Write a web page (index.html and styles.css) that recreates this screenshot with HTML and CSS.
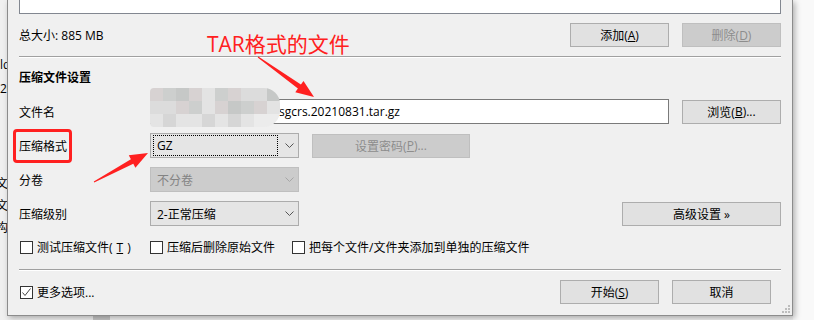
FILE: index.html
```html
<!DOCTYPE html>
<html lang="zh-CN">
<head>
  <meta charset="UTF-8">
  <meta name="viewport" content="width=device-width, initial-scale=1.0">
  <title>压缩文件设置</title>
  <link rel="stylesheet" href="styles.css">
</head>
<body>
  <div class="desktop">
    <!-- window behind the dialog, only a thin strip shows -->
    <div class="back-window">
      <div class="back-line l1">ld</div>
      <div class="back-line l2">20</div>
      <div class="back-line l3">文</div>
      <div class="back-line l4">文</div>
      <div class="back-line l5">构</div>
    </div>
    <div class="back-thumb"></div>

    <div class="dialog">
      <div class="file-list"></div>

      <div class="size-row">
        <span>总大小: 885 MB</span>
        <div class="btn-group">
          <button class="btn">添加(<u>A</u>)</button>
          <button class="btn" disabled>删除(<u>D</u>)</button>
        </div>
      </div>

      <div class="sep sep-top"></div>

      <h2 class="section-title">压缩文件设置</h2>

      <div class="form-row first">
        <span class="label">文件名</span>
        <div class="text-input">sgcrs.20210831.tar.gz</div>
        <button class="btn">浏览(<u>B</u>)...</button>
      </div>

      <div class="form-row">
        <span class="label">压缩格式</span>
        <div class="combo">
          <span class="combo-val focused">GZ</span>
          <svg class="chev" width="9" height="5" viewBox="0 0 9 5"><polyline points="0.5,0.5 4.5,4.5 8.5,0.5" fill="none" stroke="#555" stroke-width="1"/></svg>
        </div>
        <button class="btn btn-pass" disabled>设置密码(<u>P</u>)...</button>
      </div>

      <div class="form-row">
        <span class="label">分卷</span>
        <div class="combo disabled">
          <span class="combo-val">不分卷</span>
          <svg class="chev" width="9" height="5" viewBox="0 0 9 5"><polyline points="0.5,0.5 4.5,4.5 8.5,0.5" fill="none" stroke="#a6a6a6" stroke-width="1"/></svg>
        </div>
      </div>

      <div class="form-row">
        <span class="label">压缩级别</span>
        <div class="combo">
          <span class="combo-val">2-正常压缩</span>
          <svg class="chev" width="9" height="5" viewBox="0 0 9 5"><polyline points="0.5,0.5 4.5,4.5 8.5,0.5" fill="none" stroke="#555" stroke-width="1"/></svg>
        </div>
        <button class="btn btn-wide">高级设置 »</button>
      </div>

      <div class="check-row">
        <label class="check w-label"><span class="box"></span>测试压缩文件(<u>T</u>)</label>
        <label class="check w-mid"><span class="box"></span>压缩后删除原始文件</label>
        <label class="check"><span class="box"></span>把每个文件/文件夹添加到单独的压缩文件</label>
      </div>

      <div class="sep sep-bottom"></div>

      <div class="bottom-row">
        <label class="check">
          <span class="box">
            <svg width="11" height="11" viewBox="0 0 11 11"><polyline points="1.5,5.5 4,8.5 9.5,1.5" fill="none" stroke="#444" stroke-width="1"/></svg>
          </span>更多选项...
        </label>
        <div class="btn-group">
          <button class="btn">开始(<u>S</u>)</button>
          <button class="btn">取消</button>
        </div>
      </div>

      <svg class="grip" width="8" height="8" viewBox="0 0 8 8">
        <rect x="6" y="0" width="2" height="2" fill="#bdbdbd"/>
        <rect x="3" y="3" width="2" height="2" fill="#bdbdbd"/>
        <rect x="6" y="3" width="2" height="2" fill="#bdbdbd"/>
        <rect x="0" y="6" width="2" height="2" fill="#bdbdbd"/>
        <rect x="3" y="6" width="2" height="2" fill="#bdbdbd"/>
        <rect x="6" y="6" width="2" height="2" fill="#bdbdbd"/>
      </svg>
    </div>

    <!-- screenshot annotations drawn on top -->
    <div class="mosaic">
      <span></span><span></span><span></span><span></span><span></span><span></span><span></span><span></span><span></span><span></span>
      <span></span><span></span><span></span><span></span><span></span><span></span><span></span><span></span><span></span><span></span>
      <span></span><span></span><span></span><span></span><span></span><span></span><span></span><span></span><span></span><span></span>
    </div>
    <div class="note">TAR格式的文件</div>
    <div class="red-box"></div>
    <svg class="arrows" width="814" height="320" viewBox="0 0 814 320">
      <polygon points="257.7,57.4 297.9,88.6 295.3,92.3 314,97 303.5,80.9 300.9,84.6 258.3,56.6" fill="#ff2020"/>
      <polygon points="94.2,182.4 133.3,163.7 135.4,167.7 148,153 128.8,155.3 130.9,159.3 93.8,181.6" fill="#ff2020"/>
    </svg>
  </div>
</body>
</html>
```

FILE: styles.css
```css
* {
  box-sizing: border-box;
}

body {
  margin: 0;
  font-family: "Open Sans", "Noto Sans CJK SC", sans-serif;
  font-size: 12px;
  color: #000;
  background: #f0f0f0;
}

.desktop {
  position: relative;
  width: 814px;
  height: 320px;
  overflow: hidden;
  background: linear-gradient(to right, #f0f0f0 793px, #f9f9f9 793px);
}

/* the window behind, only its edge shows */
.back-window {
  position: absolute;
  left: 0;
  top: 0;
  width: 7px;
  height: 320px;
  overflow: hidden;
  display: flex;
  flex-direction: column;
  line-height: 16px;
  white-space: nowrap;
}

.back-line.l1 { margin-top: 57px; }
.back-line.l2 { margin-top: 8px; }
.back-line.l3 { margin-top: 79px; margin-left: -4px; }
.back-line.l4 { margin-top: 6px; margin-left: -4px; }
.back-line.l5 { margin-top: 6px; margin-left: -4px; }

.back-thumb {
  position: absolute;
  left: 93px;
  top: 316px;
  width: 17px;
  height: 4px;
  background: #c6c6c6;
}

/* dialog */
.dialog {
  position: relative;
  z-index: 1;
  margin-left: 7px;
  width: 786px;
  height: 316px;
  padding: 0 11px;
  background: #f0f0f0;
  border: 1px solid #8c8c8c;
  border-top: 0;
  box-shadow: 2px 2px 6px rgba(0, 0, 0, 0.3);
  display: flex;
  flex-direction: column;
}

.file-list {
  height: 14px;
  background: #fff;
  border: 1px solid #828790;
  border-top: 0;
}

.size-row {
  margin-top: 9px;
  height: 24px;
  display: flex;
  align-items: center;
  justify-content: space-between;
}

.btn-group {
  display: flex;
  gap: 13px;
}

.btn {
  width: 99px;
  height: 24px;
  padding: 0;
  font: inherit;
  color: #000;
  background: #e1e1e1;
  border: 1px solid #adadad;
  display: flex;
  align-items: center;
  justify-content: center;
}

.btn:disabled {
  color: #8d8d8d;
  background: #cccccc;
  border-color: #bfbfbf;
}

.btn-pass {
  width: 158px;
  margin-left: 13px;
}

.btn-wide {
  width: 159px;
  margin-left: auto;
}

.sep {
  height: 2px;
  border-top: 1px solid #a0a0a0;
  border-bottom: 1px solid #fff;
}

.sep-top { margin-top: 9px; }
.sep-bottom { margin-top: 14px; }

.section-title {
  margin: 12px 0 0;
  font-size: 12px;
  font-weight: bold;
  line-height: 16px;
}

.form-row {
  margin-top: 9px;
  height: 25px;
  display: flex;
  align-items: center;
}

.form-row.first {
  margin-top: 13px;
  gap: 13px;
}

.label {
  width: 131px;
  flex-shrink: 0;
}

.form-row.first .label {
  margin-right: -13px;
}

.text-input {
  width: 519px;
  height: 25px;
  padding-left: 128px;
  background: #fff;
  border: 1px solid #7a7a7a;
  display: flex;
  align-items: center;
}

.combo {
  width: 149px;
  height: 25px;
  padding: 0 4px 0 2px;
  background: #e5e5e5;
  border: 1px solid #acacac;
  display: flex;
  align-items: center;
}

.combo.disabled {
  color: #838383;
  background: #cccccc;
  border-color: #bfbfbf;
}

.combo-val {
  flex: 1;
  height: 21px;
  padding-left: 3px;
  margin-right: 7px;
  border: 1px solid transparent;
  display: flex;
  align-items: center;
}

.combo-val.focused {
  border: 1px dotted #000;
}

.check-row {
  margin-top: 13px;
  height: 16px;
  display: flex;
  align-items: center;
}

.check {
  display: flex;
  align-items: center;
  gap: 4px;
  white-space: nowrap;
}

.w-label { width: 131px; padding-left: 1px; }
.w-mid { width: 142px; }

.box {
  width: 13px;
  height: 13px;
  background: #fff;
  border: 1px solid #333;
  display: flex;
  align-items: center;
  justify-content: center;
}

.bottom-row {
  margin-top: 9px;
  height: 24px;
  padding-left: 1px;
  padding-right: 10px;
  display: flex;
  align-items: center;
  justify-content: space-between;
}

.grip {
  position: absolute;
  right: 2px;
  bottom: 2px;
}

/* annotations */
.mosaic {
  position: absolute;
  z-index: 2;
  left: 150px;
  top: 88px;
  width: 130px;
  height: 39px;
  border-radius: 4px 16px 16px 4px;
  overflow: hidden;
  display: grid;
  grid-template-columns: repeat(10, 13px);
  grid-auto-rows: 13px;
}

.mosaic span { background: #dcdcdc; }
.mosaic span:nth-child(3n+1) { background: #d7d2d2; }
.mosaic span:nth-child(4n+2) { background: #cdcfce; }
.mosaic span:nth-child(5n) { background: #e3e3e3; }
.mosaic span:nth-child(7n+3) { background: #c6c8c7; }
.mosaic span:nth-child(n+21) { background: #e4e4e4; }
.mosaic span:nth-child(22),
.mosaic span:nth-child(25),
.mosaic span:nth-child(27) { background: #d6d6d6; }
.mosaic span:nth-child(29),
.mosaic span:nth-child(30) { background: #ececec; }

.note {
  position: absolute;
  z-index: 2;
  left: 207px;
  top: 34px;
  font-size: 21px;
  line-height: 21px;
  color: #ff2020;
  white-space: nowrap;
}

.red-box {
  position: absolute;
  z-index: 2;
  left: 13px;
  top: 129px;
  width: 59px;
  height: 34px;
  border: 3px solid #ff2020;
  border-radius: 4px;
}

.arrows {
  position: absolute;
  z-index: 2;
  left: 0;
  top: 0;
}
```
